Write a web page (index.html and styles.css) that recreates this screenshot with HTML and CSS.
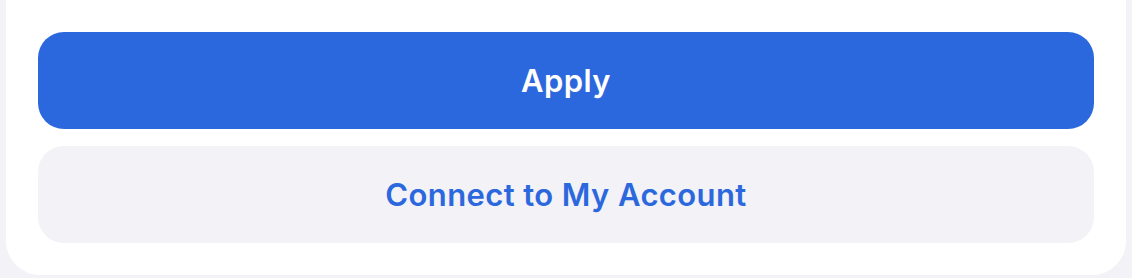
FILE: index.html
```html
<!DOCTYPE html>
<html lang="en">
<head>
<meta charset="utf-8">
<title>Actions</title>
<link rel="stylesheet" href="styles.css">
</head>
<body>
<div class="page">
  <div class="card">
    <button class="btn btn-primary" type="button">Apply</button>
    <button class="btn btn-secondary" type="button">Connect to My Account</button>
  </div>
</div>
</body>
</html>
```

FILE: styles.css
```css
html, body {
  margin: 0;
  padding: 0;
  background: #f2f2f7;
  font-family: Inter, "Noto Sans", "Liberation Sans", sans-serif;
}

.page {
  padding: 0 6px;
}

.card {
  background: #ffffff;
  border-radius: 0 0 34px 34px;
  padding: 32px 32px 32px;
  display: flex;
  flex-direction: column;
  gap: 17px;
}

.btn {
  height: 97px;
  border: none;
  border-radius: 26px;
  font-family: inherit;
  font-size: 31px;
  font-weight: 600;
  letter-spacing: 0.4px;
  display: flex;
  align-items: center;
  justify-content: center;
  cursor: pointer;
  width: 100%;
}

.btn-primary {
  background: #2c68dd;
  color: #ffffff;
}

.btn-secondary {
  background: #f2f2f7;
  color: #2c68dd;
}
```
